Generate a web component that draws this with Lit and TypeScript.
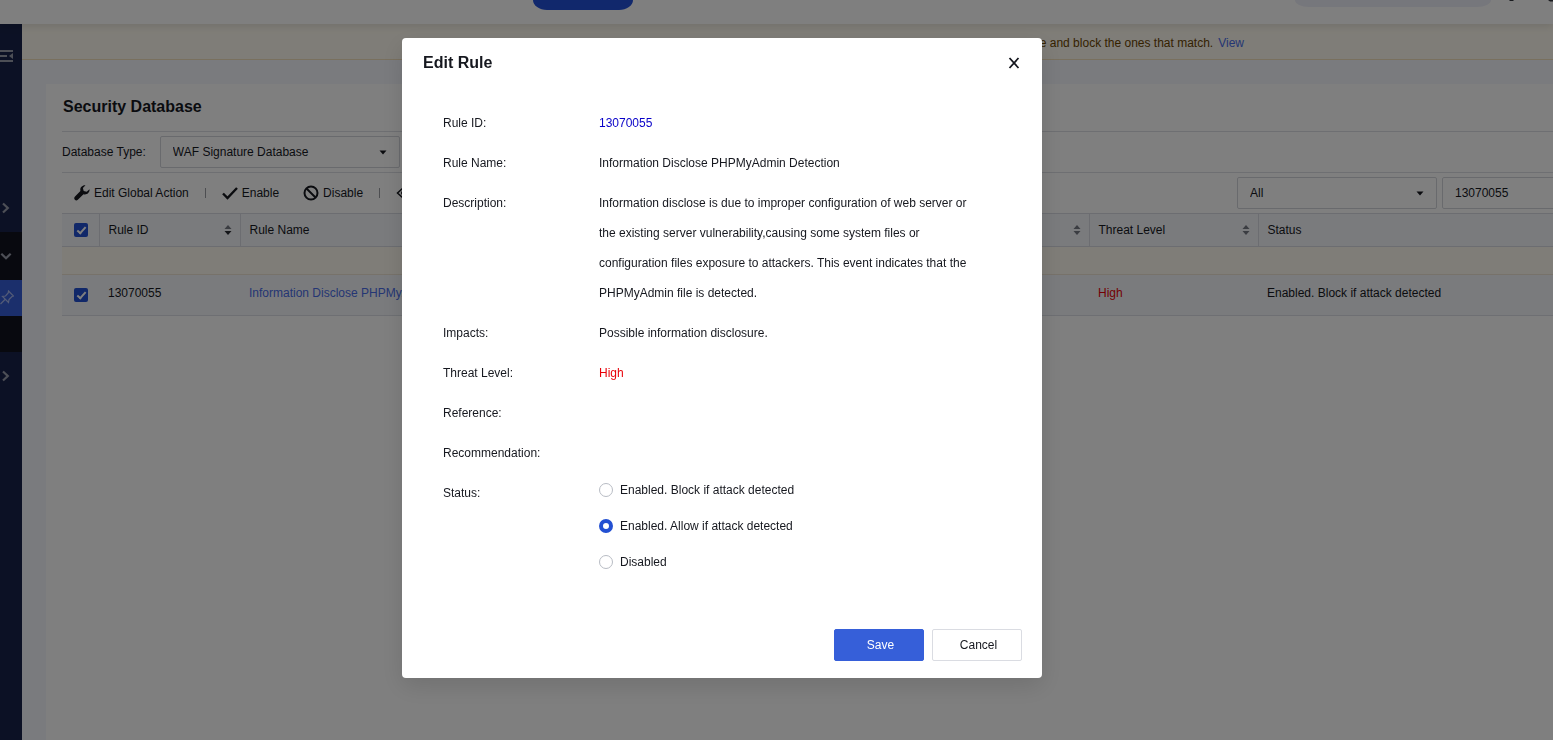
import { LitElement, html, css } from "lit";
import { customElement, state } from "lit/decorators.js";

const caret = html`<svg class="caret" width="8" height="5" viewBox="0 0 8 5" aria-hidden="true"><path d="M0.5 0.5h7L4 4.5z" fill="currentColor"/></svg>`;
const sorter = (descending = false) => html`<svg width="8" height="10" viewBox="0 0 8 10" aria-hidden="true"><path d="M0.5 4L4 0l3.500 4z" fill="#767a84"/><path d="M0.500 6h7L4 10z" fill=${descending ? "#2a2c33" : "#767a84"} /></svg>`;
const chevronRight = html`<svg width="12" height="12" viewBox="0 0 12 12" aria-hidden="true"><path d="M3 1.500L7.800 6 3 10.500" fill="none" stroke="#9b9fad" stroke-width="2.200"/></svg>`;
const chevronDown = html`<svg width="12" height="12" viewBox="0 0 12 12" aria-hidden="true"><path d="M1.300 3.800L6 8.200l4.700-4.400" fill="none" stroke="#9b9fad" stroke-width="2.200"/></svg>`;

@customElement("edit-rule-dialog")
export class EditRuleDialog extends LitElement {
  @state() private status = "allow";

  static styles = css`
    :host { display: block; width: 640px; max-width: 100%; }
    .dialog {
      box-sizing: border-box;
      background: #fff;
      border-radius: 4px;
      padding: 13px 20px 17px 21px;
      box-shadow: 0 8px 24px rgba(0, 0, 0, 0.12);
      color: #16181f;
      font-size: 12px;
    }
    .head { display: flex; align-items: center; justify-content: space-between; height: 24px; }
    .title { margin: 0; font-size: 16px; line-height: 24px; font-weight: 700; }
    .close { display: flex; padding: 2px; margin: 0; border: 0; background: none; color: #16181f; cursor: pointer; }
    .body { padding: 33px 50px 0 20px; display: flex; flex-direction: column; gap: 10px; }
    .row { display: grid; grid-template-columns: 156px 1fr; line-height: 30px; }
    .row.group { align-items: start; }
    .id { color: #0800c8; }
    .high { color: #e80008; }
    .options { display: flex; flex-direction: column; gap: 12px; }
    .option { display: flex; align-items: center; gap: 7px; line-height: 24px; cursor: pointer; }
    .option input {
      appearance: none;
      box-sizing: border-box;
      width: 14px;
      height: 14px;
      margin: 0;
      border: 1px solid #b8bcc4;
      border-radius: 50%;
      background: #fff;
    }
    .option input:checked { border: 4px solid #2350d2; }
    .foot { display: flex; justify-content: flex-end; gap: 8px; padding-top: 55px; }
    .btn {
      box-sizing: border-box;
      width: 90px;
      height: 32px;
      padding: 0 0 0 3px;
      font: inherit;
      border: 1px solid #dadce2;
      border-radius: 2px;
      background: #fff;
      color: #16181f;
      cursor: pointer;
    }
    .btn.primary { background: #365fd9; border-color: #365fd9; color: #fff; }
  `;

  render() {
    const options = [
      ["block", "Enabled. Block if attack detected"],
      ["allow", "Enabled. Allow if attack detected"],
      ["disabled", "Disabled"],
    ];
    return html`
      <section class="dialog" role="dialog" aria-modal="true" aria-labelledby="title">
        <header class="head">
          <h2 class="title" id="title">Edit Rule</h2>
          <button class="close" aria-label="Close">
            <svg width="12" height="12" viewBox="0 0 12 12"><path d="M1.500 1l9 10M10.500 1l-9 10" stroke="currentColor" stroke-width="1.800"/></svg>
          </button>
        </header>
        <div class="body">
          <div class="row"><span>Rule ID:</span><span class="id">13070055</span></div>
          <div class="row"><span>Rule Name:</span><span>Information Disclose PHPMyAdmin Detection</span></div>
          <div class="row"><span>Description:</span><span>Information disclose is due to improper configuration of web server or the existing server vulnerability,causing some system files or configuration files exposure to attackers. This event indicates that the PHPMyAdmin file is detected.</span></div>
          <div class="row"><span>Impacts:</span><span>Possible information disclosure.</span></div>
          <div class="row"><span>Threat Level:</span><span class="high">High</span></div>
          <div class="row"><span>Reference:</span><span></span></div>
          <div class="row"><span>Recommendation:</span><span></span></div>
          <div class="row group" role="radiogroup" aria-labelledby="status-label">
            <span id="status-label">Status:</span>
            <div class="options">
              ${options.map(([value, text]) => html`
                <label class="option">
                  <input type="radio" name="status" value=${value} .checked=${this.status === value}
                    @change=${() => (this.status = value)} />${text}
                </label>`)}
            </div>
          </div>
        </div>
        <footer class="foot">
          <button class="btn primary">Save</button>
          <button class="btn">Cancel</button>
        </footer>
      </section>`;
  }
}

@customElement("app-root")
export class AppRoot extends LitElement {
  static styles = css`
    :host {
      display: block;
      font-family: "Liberation Sans", Arial, sans-serif;
      font-size: 12px;
      color: #16181f;
    }
    .page { height: 100vh; display: flex; flex-direction: column; overflow: hidden; background: #f5f7fd; }
    .topbar {
      position: relative;
      flex: none;
      height: 24px;
      display: flex;
      align-items: flex-start;
      justify-content: space-between;
      padding-left: 533px;
      background: #fff;
      box-shadow: 0 2px 8px rgba(0, 0, 0, 0.12);
    }
    .pill { width: 100px; height: 10px; border-radius: 0 0 14px 14px / 0 0 10px 10px; background: #2350d8; }
    .tools { display: flex; gap: 16px; }
    .search { width: 196px; height: 7px; border-radius: 0 0 14px 14px / 0 0 7px 7px; background: #eceef8; }
    .shell { flex: 1; display: flex; min-height: 0; }
    .side { flex: none; width: 22px; background: #19234a; display: flex; flex-direction: column; overflow: hidden; }
    .side-item { flex: none; display: flex; align-items: center; height: 48px; }
    .toggle { height: 64px; margin-bottom: 96px; }
    .dark { background: #10131f; }
    .pin { height: 36px; background: #365fd9; }
    .blank { height: 36px; }
    .main { flex: 1; min-width: 0; display: flex; flex-direction: column; }
    .notice {
      flex: none;
      box-sizing: border-box;
      height: 36px;
      display: flex;
      align-items: center;
      justify-content: flex-end;
      gap: 5px;
      padding: 2px 309px 0 0;
      white-space: nowrap;
      background: #fffbf0;
      border-bottom: 1px solid #f3e0bc;
      color: #6b4400;
    }
    .link { color: #4a6de8; text-decoration: none; }
    .panel { flex: 1; margin: 24px 0 0 24px; padding: 8px 0 0 16px; background: #fff; min-width: 0; overflow: hidden; }
    .heading { margin: 0; height: 39px; padding-left: 1px; font-size: 16px; line-height: 30px; font-weight: 700; border-bottom: 1px solid #dcdee4; }
    .bar { display: flex; align-items: center; height: 40px; }
    .filter { gap: 14px; border-bottom: 1px solid #dcdee4; }
    .field { position: relative; display: flex; align-items: center; color: #16181f; }
    .field select, .field input {
      appearance: none;
      box-sizing: border-box;
      height: 32px;
      margin: 0;
      padding: 0 12px;
      border: 1px solid #d3d5db;
      border-radius: 2px;
      background: #fff;
      font: inherit;
      color: inherit;
    }
    .type select { width: 240px; }
    .all select { width: 200px; }
    .query { width: 111px; overflow: hidden; }
    .query input { flex: none; width: 160px; }
    .caret { position: absolute; right: 13px; top: 14px; pointer-events: none; }
    .actions { padding-left: 12px; justify-content: space-between; }
    .group { display: flex; align-items: center; white-space: nowrap; }
    .actions .group { gap: 5px; }
    .act { display: flex; align-items: center; gap: 4px; padding: 0; margin: 0; border: 0; background: none; font: inherit; color: inherit; }
    .split { width: 1px; height: 10px; margin: 0 11px; background: #9a9ca3; }
    .act + .act { margin-left: 19px; }
    .grid { width: 100%; border-collapse: collapse; table-layout: fixed; }
    .grid th, .grid td { box-sizing: border-box; padding: 0 8px 0 9px; text-align: left; font-weight: 400; white-space: nowrap; overflow: hidden; }
    .grid th { height: 33px; background: #f5f7fa; border: solid #d8dbe3; border-width: 1px 0 1px 1px; }
    .grid th:first-child { border-left: 0; }
    .grid td { height: 41px; padding-bottom: 4px; background: #f5f7fa; border-bottom: 1px solid #dcdfe6; }
    .grid .tip { height: 28px; padding: 0; background: #fffbf0; border-bottom-color: #eee5d5; }
    .grid .pick { width: 37px; padding: 0 0 0 12px; }
    .cell { display: flex; align-items: center; justify-content: space-between; }
    .check {
      appearance: none;
      display: grid;
      place-items: center;
      width: 14px;
      height: 14px;
      margin: 0;
      border-radius: 2px;
      background: #2350d2;
    }
    .check:checked::before {
      content: "";
      box-sizing: border-box;
      width: 5px;
      height: 9px;
      border: solid #fff;
      border-width: 0 2px 2px 0;
      transform: translateY(-1px) rotate(42deg);
    }
    .high { color: #e80008; }
    .c-id { width: 141px; }
    .c-level { width: 169px; }
    .c-status { width: 295px; }
    .mask {
      position: fixed;
      inset: 0;
      display: flex;
      align-items: flex-start;
      justify-content: center;
      padding: 38px 109px 0 0;
      background: rgba(0, 0, 0, 0.5);
    }
  `;

  render() {
    return html`
      <div class="page">
        <header class="topbar">
          <div class="pill"></div>
          <div class="tools">
            <div class="search"></div>
            <svg width="46" height="4" viewBox="0 0 46 4" aria-hidden="true"><path d="M2 0h5L6 1H3zM41 0h5v1.500h-3z" fill="#33363f"/></svg>
          </div>
        </header>
        <div class="shell">
          <nav class="side">
            <div class="side-item toggle">
              <svg width="14" height="14" viewBox="0 0 14 14" aria-hidden="true"><path d="M0 2h13M0 7h7M0 12h13" stroke="#9b9fad" stroke-width="2"/><path d="M13 4v6L9 7z" fill="#9b9fad"/></svg>
            </div>
            <div class="side-item">${chevronRight}</div>
            <div class="side-item dark">${chevronDown}</div>
            <div class="side-item pin">
              <svg width="14" height="16" viewBox="0 0 14 16" aria-hidden="true"><path d="M8.500 1l5 5-1.500.5-3 3-.5 3L2.500 6.500l3-.500 2.700-3zM5 9.500L0.500 14" fill="none" stroke="#a9b8ef" stroke-width="1.200"/></svg>
            </div>
            <div class="side-item dark blank"></div>
            <div class="side-item">${chevronRight}</div>
          </nav>
          <main class="main">
            <div class="notice"><span>e and block the ones that match.</span><a class="link" href="#">View</a></div>
            <section class="panel">
              <h1 class="heading">Security Database</h1>
              <div class="bar filter">
                <label for="type">Database Type:</label>
                <div class="field type"><select id="type"><option>WAF Signature Database</option></select>${caret}</div>
              </div>
              <div class="bar actions">
                <div class="group">
                  <button class="act"><svg width="16" height="16" viewBox="0 0 16 16"><path d="M15.500 4.200l-2.800 2.500-3-.7-.8-3L11.500.3C9 0 5.500 2 6.400 6L.8 11.800c-1.800 2 1 4.900 3 3L9.500 9.300c3.500 1 6.400-1.800 6-5.100z" fill="currentColor"/></svg>Edit Global Action</button>
                  <span class="split"></span>
                  <button class="act"><svg width="16" height="14" viewBox="0 0 16 14"><path d="M1 7.500l4.500 4.500L15 2" fill="none" stroke="currentColor" stroke-width="2.400"/></svg>Enable</button>
                  <button class="act"><svg width="16" height="16" viewBox="0 0 16 16"><circle cx="8" cy="8" r="6.500" fill="none" stroke="currentColor" stroke-width="2"/><path d="M3.500 3.500l9 9" stroke="currentColor" stroke-width="2"/></svg>Disable</button>
                  <span class="split"></span>
                  <svg width="14" height="12" viewBox="0 0 14 12" aria-hidden="true"><path d="M7 1L1.500 6 7 11" fill="none" stroke="currentColor" stroke-width="1.500"/><circle cx="7" cy="6" r="2" fill="currentColor"/></svg>
                </div>
                <div class="group">
                  <div class="field all"><select aria-label="Field"><option>All</option></select>${caret}</div>
                  <div class="field query"><input aria-label="Search" .value=${"13070055"} /></div>
                </div>
              </div>
              <table class="grid">
                <colgroup><col class="pick" /><col class="c-id" /><col /><col class="c-level" /><col class="c-status" /></colgroup>
                <thead>
                  <tr>
                    <th class="pick"><input class="check" type="checkbox" checked aria-label="Select all" /></th>
                    <th><div class="cell">Rule ID ${sorter(true)}</div></th>
                    <th><div class="cell">Rule Name ${sorter()}</div></th>
                    <th><div class="cell">Threat Level ${sorter()}</div></th>
                    <th>Status</th>
                  </tr>
                </thead>
                <tbody>
                  <tr><td class="tip" colspan="5"></td></tr>
                  <tr>
                    <td class="pick"><input class="check" type="checkbox" checked aria-label="Select 13070055" /></td>
                    <td>13070055</td>
                    <td><a class="link" href="#">Information Disclose PHPMyAdmin Detection</a></td>
                    <td class="high">High</td>
                    <td>Enabled. Block if attack detected</td>
                  </tr>
                </tbody>
              </table>
            </section>
          </main>
        </div>
      </div>
      <div class="mask"><edit-rule-dialog></edit-rule-dialog></div>
    `;
  }
}
